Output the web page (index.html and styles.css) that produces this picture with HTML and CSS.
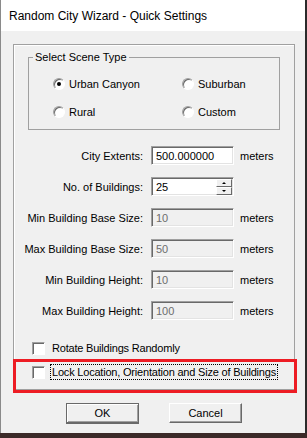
FILE: index.html
```html
<!DOCTYPE html>
<html lang="en">

<head>
    <meta charset="UTF-8">
    <meta name="viewport" content="width=device-width, initial-scale=1.0">
    <title>Random City Wizard - Quick Settings</title>
    <link rel="stylesheet" href="styles.css">
</head>

<body>
    <div class="window">
        <div class="titlebar">Random City Wizard - Quick Settings</div>

        <div class="client">
            <div class="frame">
                <!-- scene type -->
                <fieldset class="scene">
                    <legend>Select Scene Type</legend>
                    <div class="radios">
                        <label class="radio"><span class="dot checked"></span>Urban Canyon</label>
                        <label class="radio"><span class="dot"></span>Suburban</label>
                        <label class="radio"><span class="dot"></span>Rural</label>
                        <label class="radio"><span class="dot"></span>Custom</label>
                    </div>
                </fieldset>

                <!-- city values -->
                <div class="fields">
                    <div class="row">
                        <span class="label">City Extents:</span>
                        <span class="edit">500.000000</span>
                        <span class="unit">meters</span>
                    </div>
                    <div class="row">
                        <span class="label">No. of Buildings:</span>
                        <span class="edit spin">25
                            <span class="spin-btns">
                                <span class="spin-btn"><i class="up"></i></span>
                                <span class="spin-btn"><i class="down"></i></span>
                            </span>
                        </span>
                    </div>
                    <div class="row">
                        <span class="label">Min Building Base Size:</span>
                        <span class="edit disabled">10</span>
                        <span class="unit">meters</span>
                    </div>
                    <div class="row">
                        <span class="label">Max Building Base Size:</span>
                        <span class="edit disabled">50</span>
                        <span class="unit">meters</span>
                    </div>
                    <div class="row">
                        <span class="label">Min Building Height:</span>
                        <span class="edit disabled">10</span>
                        <span class="unit">meters</span>
                    </div>
                    <div class="row">
                        <span class="label">Max Building Height:</span>
                        <span class="edit disabled">100</span>
                        <span class="unit">meters</span>
                    </div>
                </div>

                <!-- options -->
                <div class="checks">
                    <label class="check"><span class="box"></span><span class="text">Rotate Buildings Randomly</span></label>
                    <label class="check"><span class="box"></span><span class="text focus">Lock Location, Orientation and Size of Buildings</span></label>
                </div>

                <div class="highlight"></div>
            </div>

            <div class="buttons">
                <button class="btn default">OK</button>
                <button class="btn">Cancel</button>
            </div>
        </div>
    </div>
</body>

</html>
```

FILE: styles.css
```css
/* dialog look */
:root {
    --face: #f0f0f0;
    --line: #a0a0a0;
    --shadow: #696969;
    --text: #000;
}

body {
    margin: 0;
    background: #3b2a28;
    font-family: "Liberation Sans", Arial, sans-serif;
    font-size: 11px;
    color: var(--text);
}

.window {
    width: 304px;
    height: 433px;
    border-left: 1px solid #8a8a8a;
    border-right: 2px solid #2b2b2b;
    background: var(--face);
    display: flex;
    flex-direction: column;
}

.titlebar {
    height: 31px;
    flex: none;
    background: #fff;
    font-size: 12px;
    line-height: 32px;
    padding-left: 8px;
    color: #000;
}

.client {
    flex: 1;
    padding-top: 13px;
}

.frame {
    position: relative;
    margin-left: 12px;
    width: 280px;
    border: 1px solid var(--line);
    box-shadow: inset 1px 1px #fff;
    padding-bottom: 5px;
}

/* scene type group */
.scene {
    margin: 6px 0 0 14px;
    width: 250px;
    padding: 0 0 3px;
    border: 1px solid var(--line);
    box-sizing: content-box;
}

.scene legend {
    margin-left: 4px;
    padding: 0 2px;
    line-height: 13px;
}

.radios {
    display: grid;
    grid-template-columns: 129px 1fr;
    grid-auto-rows: 28px;
    padding: 6px 0 0 24px;
}

.radio {
    display: flex;
    align-items: center;
    gap: 4px;
}

.dot {
    width: 10px;
    height: 10px;
    border-radius: 50%;
    background: #fff;
    border: 1px solid;
    border-color: var(--line) #fff #fff var(--line);
    box-shadow: inset 1px 1px var(--shadow);
    display: flex;
    align-items: center;
    justify-content: center;
}

.dot.checked::after {
    content: "";
    width: 4px;
    height: 4px;
    border-radius: 50%;
    background: #000;
}

/* value rows */
.fields {
    margin-top: 10px;
}

.row {
    display: flex;
    align-items: center;
    height: 31px;
}

.label {
    width: 129px;
    text-align: right;
    margin-right: 8px;
}

.edit {
    width: 77px;
    height: 16px;
    line-height: 16px;
    padding-left: 4px;
    background: #fff;
    border: 1px solid;
    border-color: var(--line) #fff #fff var(--line);
    box-shadow: inset 1px 1px var(--shadow), inset -1px -1px #e3e3e3;
    padding-top: 1px;
    margin-right: 6px;
    position: relative;
}

.edit.disabled {
    background: var(--face);
    color: #6d6d6d;
}

.spin {
    display: flex;
    justify-content: space-between;
}

.spin-btns {
    display: flex;
    flex-direction: column;
    margin: 0 1px 0 0;
}

.spin-btn {
    width: 14px;
    height: 6px;
    background: var(--face);
    border: 1px solid;
    border-color: #fff var(--shadow) var(--shadow) #fff;
    display: flex;
    align-items: center;
    justify-content: center;
}

.spin-btn i {
    width: 0;
    height: 0;
    border-left: 2px solid transparent;
    border-right: 2px solid transparent;
}

.spin-btn .up {
    border-bottom: 2px solid #000;
}

.spin-btn .down {
    border-top: 2px solid #000;
}

/* check boxes */
.checks {
    margin-top: 10px;
}

.check {
    display: flex;
    align-items: center;
    height: 24px;
    padding-left: 18px;
}

.box {
    width: 11px;
    height: 11px;
    background: #fff;
    border: 1px solid;
    border-color: var(--line) #fff #fff var(--line);
    box-shadow: inset 1px 1px var(--shadow);
    margin-right: 5px;
}

.text {
    padding: 1px 1px;
    border: 1px solid transparent;
    letter-spacing: -0.2px;
}

.text.focus {
    border: 1px dotted #000;
}

/* annotation */
.highlight {
    position: absolute;
    left: -1px;
    top: 314px;
    width: 278px;
    height: 28px;
    border: 3px solid #ed1c24;
}

/* dialog buttons */
.buttons {
    display: flex;
    gap: 30px;
    padding: 13px 0 0 65px;
}

.btn {
    width: 73px;
    height: 20px;
    padding: 0;
    font: inherit;
    color: #000;
    background: var(--face);
    border: 1px solid;
    border-color: #fff var(--shadow) var(--shadow) #fff;
    box-shadow: inset -1px -1px #a0a0a0;
}

.btn.default {
    border-color: var(--shadow);
    box-shadow: inset 1px 1px #fff, inset -1px -1px var(--line), 0 1px var(--shadow);
}
```
